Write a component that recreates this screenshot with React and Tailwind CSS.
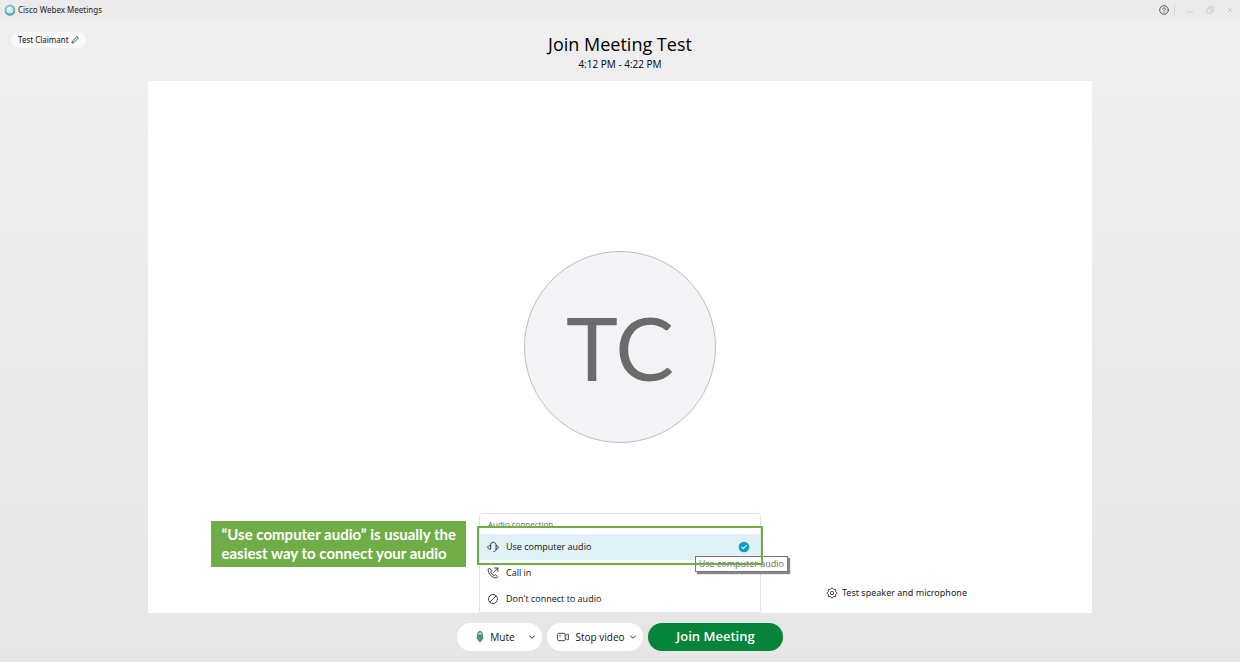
import { useState } from "react";

const AUDIO_OPTIONS = [
  { id: "computer", label: "Use computer audio", Icon: HeadsetIcon },
  { id: "callin", label: "Call in", Icon: CallInIcon },
  { id: "none", label: "Don't connect to audio", Icon: NoAudioIcon },
];

function WebexLogo() {
  return (
    <svg viewBox="0 0 12 12" className="size-3" aria-hidden="true">
      <circle cx="6" cy="6" r="5.3" fill="#74b6bd" />
      <path d="M1.2 8.2A5.3 5.3 0 0 0 10.9 8" fill="none" stroke="#5d8c94" strokeWidth="1" />
      <circle cx="5.8" cy="5.8" r="3.5" fill="#c4eef2" />
      <circle cx="5" cy="5" r="1.6" fill="#e6fbfc" />
    </svg>
  );
}

function PencilIcon() {
  return (
    <svg viewBox="0 0 8 8" className="size-2" fill="none" stroke="#222" strokeWidth="0.8" strokeLinejoin="round" aria-hidden="true">
      <path d="M0.9 7.1 1.4 5.2 5.5 1.1a1 1 0 0 1 1.4 1.4L2.8 6.6Z" />
    </svg>
  );
}

function HelpIcon() {
  return (
    <svg viewBox="0 0 10 10" className="size-[10px]" fill="none" stroke="#444" strokeWidth="0.9" strokeLinecap="round" aria-hidden="true">
      <circle cx="5" cy="5" r="4.3" />
      <path d="M3.7 4.1a1.3 1.3 0 1 1 2 1.1c-.5.3-.7.5-.7.9" />
      <path d="M5 7.4v.1" />
    </svg>
  );
}

function HeadsetIcon() {
  return (
    <svg viewBox="0 0 12 12" className="size-3" fill="none" stroke="#2b2b2b" strokeWidth="0.9" strokeLinecap="round" strokeLinejoin="round" aria-hidden="true">
      <path d="M3.4 4.4C3.4 2.400 4.600 1.200 6.200 1.200s2.900 1.200 2.900 3v4.200c0 1.400-.9 2.100-2.300 2.200" />
      <path d="M3.600 4.400v3.800C1.700 8.200.8 7.400.8 6.300s.9-1.900 2.800-1.900Z" />
      <path d="M9.100 4.600c1.500.1 2.200.8 2.200 1.800s-.7 1.700-2.200 1.800" />
    </svg>
  );
}

function CallInIcon() {
  return (
    <svg viewBox="0 0 12 12" className="size-3" fill="none" stroke="#2b2b2b" strokeWidth="0.9" strokeLinecap="round" strokeLinejoin="round" aria-hidden="true">
      <path d="M2.200 1.300 1.200 2.300C.9 4.800 2.300 7 3.700 8.400s3.400 2.600 6 2.400l1-1-2.300-2.100-1.300 1C5.800 8 4.300 6.500 3.600 5.200L4.500 3.900Z" />
      <path d="M6.400 5.500 10.900 1M7.600 1h3.300v3.300" />
    </svg>
  );
}

function NoAudioIcon() {
  return (
    <svg viewBox="0 0 12 12" className="size-3" fill="none" stroke="#2b2b2b" strokeWidth="0.9" aria-hidden="true">
      <circle cx="6" cy="6" r="4.500" />
      <path d="m2.900 9.100 6.200-6.200" />
    </svg>
  );
}

function CheckBadge() {
  return (
    <svg viewBox="0 0 12 12" className="size-3" fill="none" aria-hidden="true">
      <circle cx="6" cy="6" r="5.300" fill="#0a9bc6" />
      <path d="m3.700 6.100 1.700 1.600 2.900-3.200" stroke="#fff" strokeWidth="1.100" strokeLinecap="round" strokeLinejoin="round" />
    </svg>
  );
}

function GearIcon() {
  return (
    <svg viewBox="0 0 24 24" className="size-3" fill="none" stroke="#333" strokeWidth="1.700" strokeLinejoin="round" aria-hidden="true">
      <path d="m12 1.500 2.900 3.400 4.500-.3-.3 4.500L22.500 12l-3.400 2.900.3 4.500-4.500-.3L12 22.500l-2.900-3.400-4.500.3.300-4.500L1.500 12l3.400-2.900-.3-4.500 4.500.3Z" />
      <circle cx="12" cy="12" r="3.500" />
    </svg>
  );
}

function MicIcon() {
  return (
    <svg viewBox="0 0 8 12" className="h-3 w-2" fill="none" strokeLinecap="round" aria-hidden="true">
      <rect x="1.700" y="0.700" width="4.600" height="7.800" rx="2.200" fill="#c9ead8" stroke="#2f5d47" strokeWidth="0.900" />
      <path d="M2.200 3.600h3.600v2.700a1.800 1.800 0 0 1-3.600 0Z" fill="#1fa365" />
      <path d="M1.100 6.600c.1 1.800 1.200 2.900 2.900 2.900s2.800-1.100 2.900-2.900M4 9.700v1.600" stroke="#2a4d3c" strokeWidth="0.900" />
    </svg>
  );
}

function CameraIcon() {
  return (
    <svg viewBox="0 0 12 10" className="h-[10px] w-3" fill="none" stroke="#333" strokeWidth="0.900" strokeLinejoin="round" aria-hidden="true">
      <rect x="0.600" y="1.300" width="7.600" height="7.400" rx="1.200" />
      <path d="M8.200 4 10.200 2.300h1.200v5.400h-1.200L8.200 6" />
      <circle cx="3" cy="3.700" r="0.900" fill="#2aa869" stroke="none" />
    </svg>
  );
}

function ChevronIcon() {
  return (
    <svg viewBox="0 0 8 8" className="size-2" fill="none" stroke="#222" strokeWidth="0.900" strokeLinecap="round" strokeLinejoin="round" aria-hidden="true">
      <path d="m1.500 3 2.500 2.200L6.500 3" />
    </svg>
  );
}

function WindowButton({ label, children }) {
  return (
    <button type="button" aria-label={label} className="flex size-5 items-center justify-center">
      <svg viewBox="0 0 8 8" className="size-2" fill="none" stroke="#cacaca" strokeWidth="0.900" aria-hidden="true">
        {children}
      </svg>
    </button>
  );
}

function TitleBar() {
  return (
    <div className="flex h-5 items-center justify-between bg-[#ebebeb] pl-1">
      <div className="flex items-center gap-[2px] font-['Noto_Sans',sans-serif] text-[8px] text-[#222]">
        <WebexLogo />
        <span>Cisco Webex Meetings</span>
      </div>
      <div className="flex items-center">
        <button type="button" aria-label="Help" className="mr-[5px]">
          <HelpIcon />
        </button>
        <div className="mr-[5px] h-3 w-px bg-[#d6d6d6]" />
        <WindowButton label="Minimize">
          <path d="M1 6h6" />
        </WindowButton>
        <WindowButton label="Restore">
          <path d="M0.800 2.800h4.700v4.400H.8ZM2.500 2.800V1h4.700v4.500H5.500" />
        </WindowButton>
        <WindowButton label="Close">
          <path d="m1.300 1.300 5.400 5.400M6.700 1.300 1.300 6.700" />
        </WindowButton>
      </div>
    </div>
  );
}

function MeetingHeader() {
  return (
    <header className="grid grid-cols-3 items-start pt-3 pb-[9px]">
      <div className="pl-[11px]">
        <button
          type="button"
          className="flex h-4 items-center gap-[2px] rounded-full bg-[#f9f9f9] px-[7px] font-['Noto_Sans',sans-serif] text-[8px] text-[#111]"
        >
          Test Claimant
          <PencilIcon />
        </button>
      </div>
      <div className="text-center text-black">
        <h1 className="text-[18px] leading-6">Join Meeting Test</h1>
        <p className="text-[10px] leading-4">4:12 PM - 4:22 PM</p>
      </div>
    </header>
  );
}

function AudioMenu() {
  const [selected, setSelected] = useState("computer");

  return (
    <div className="rounded-t-sm border border-[#e2e2e2] bg-white text-[9px] text-[#111]">
      <p className="h-5 pt-1 pl-2 text-[8px] leading-3 text-[#666]">Audio connection</p>
      {AUDIO_OPTIONS.map(({ id, label, Icon }) => (
        <div key={id} className="relative">
          <button
            type="button"
            onClick={() => setSelected(id)}
            className={`flex h-[26px] w-full items-center gap-[7px] pr-[10px] pl-[7px] text-left ${
              selected === id ? "bg-[#e0f1f8]" : "bg-white"
            }`}
          >
            <Icon />
            <span className="flex-1">{label}</span>
            {selected === id && <CheckBadge />}
          </button>
          {id === "computer" && (
            <>
              <div
                role="tooltip"
                className="absolute top-[22px] -right-7 z-10 border border-[#777] bg-white px-[3px] leading-[14px] whitespace-nowrap text-[#666] shadow-[2px_2px_1px_#888]"
              >
                {label}
              </div>
              {/* Highlight frame */}
              <div className="pointer-events-none absolute -inset-x-[3px] -top-2 -bottom-[5px] z-20 border-2 border-[#70ad47]" />
            </>
          )}
        </div>
      ))}
    </div>
  );
}

function Preview() {
  return (
    <main className="relative mx-[148px] flex flex-1 items-center justify-center bg-white">
      <div className="flex size-48 items-center justify-center rounded-full border border-[#bdbdbd] bg-[#f4f4f6] font-['Lato',sans-serif] text-[88px] leading-none text-[#6b6b6d]">
        TC
      </div>

      <div className="absolute inset-x-0 bottom-0 grid grid-cols-[1fr_282px_1fr] items-end">
        <div className="mr-[13px] mb-[46px] justify-self-end bg-[#70ad47] py-1 px-[10px] font-['Lato',sans-serif] text-[15px] leading-[19px] font-bold text-white">
          “Use computer audio” is usually the
          <br />
          easiest way to connect your audio
        </div>
        <AudioMenu />
        <button
          type="button"
          className="mb-3 ml-[65px] flex h-4 items-center gap-1 justify-self-start font-['Noto_Sans',sans-serif] text-[9px] text-[#222]"
        >
          <GearIcon />
          Test speaker and microphone
        </button>
      </div>
    </main>
  );
}

function ControlPill({ icon, label, menuLabel, className }) {
  return (
    <div className={`flex h-7 items-center rounded-full bg-white text-[10px] text-[#111] ${className}`}>
      <button type="button" className="flex h-full flex-1 items-center justify-center gap-[6px] pl-[6px]">
        {icon}
        {label}
      </button>
      <button type="button" aria-label={menuLabel} className="flex h-full items-center pr-[6px]">
        <ChevronIcon />
      </button>
    </div>
  );
}

export default function App() {
  return (
    <div className="flex min-h-screen flex-col bg-gradient-to-b from-[#efefef] to-[#e6e6e6] font-['Open_Sans','Noto_Sans',sans-serif]">
      <TitleBar />
      <MeetingHeader />
      <Preview />
      <footer className="flex items-start justify-center gap-[5px] pt-[10px] pb-[11px]">
        <ControlPill icon={<MicIcon />} label="Mute" menuLabel="Audio options" className="w-[85px]" />
        <ControlPill icon={<CameraIcon />} label="Stop video" menuLabel="Video options" className="w-24" />
        <button
          type="button"
          className="h-7 w-[135px] rounded-full bg-[#05843a] text-[13px] font-semibold text-white"
        >
          Join Meeting
        </button>
      </footer>
    </div>
  );
}
